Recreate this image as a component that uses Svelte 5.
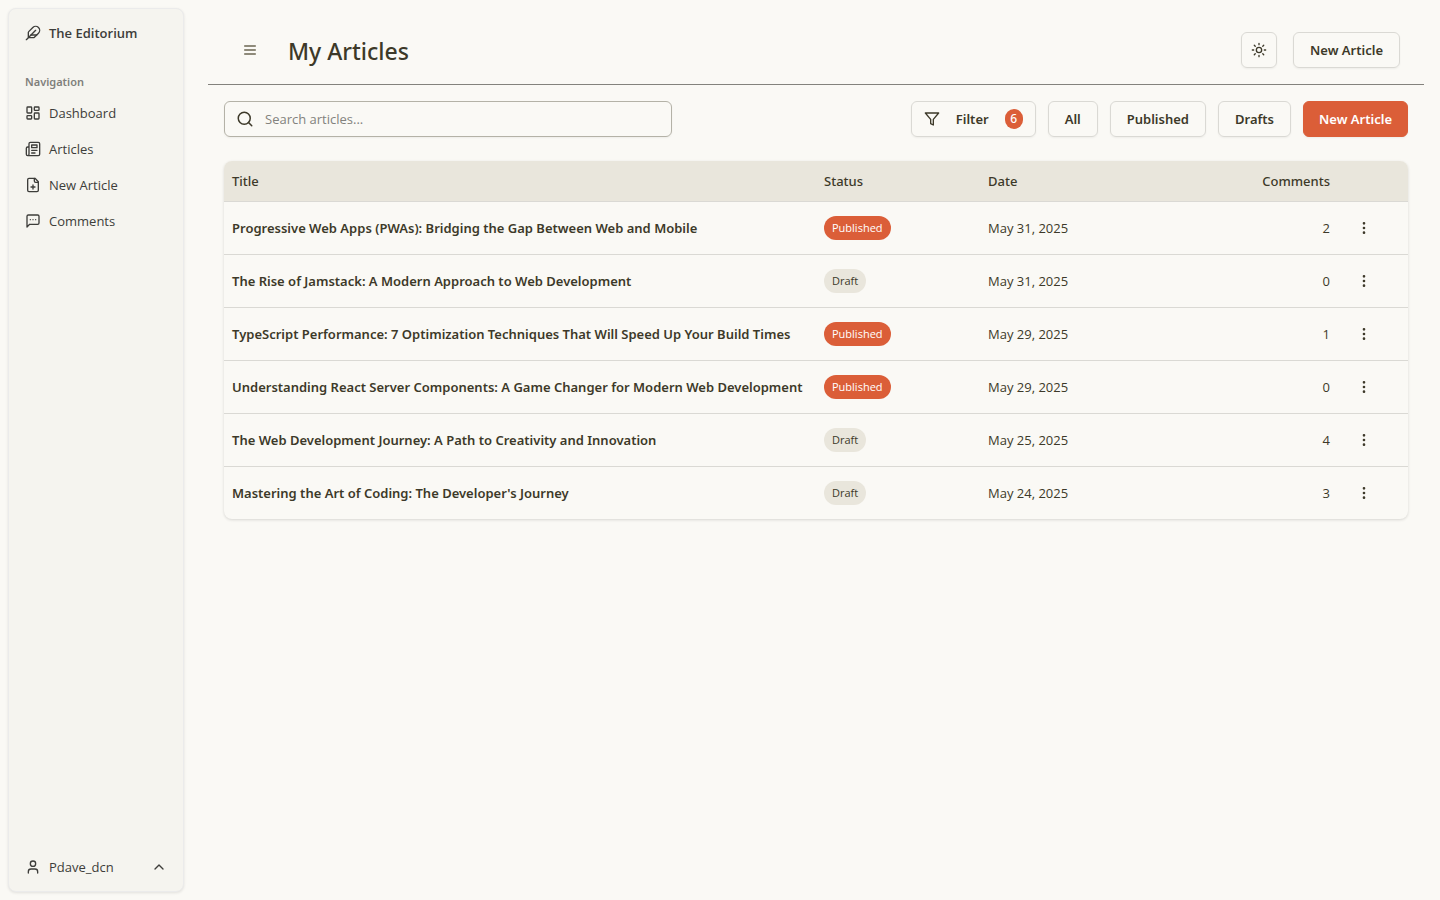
<script>
  const nav = [
    { label: 'Dashboard', icon: 'dashboard' },
    { label: 'Articles', icon: 'newspaper' },
    { label: 'New Article', icon: 'file' },
    { label: 'Comments', icon: 'message' }
  ];
  const articles = [
    { title: 'Progressive Web Apps (PWAs): Bridging the Gap Between Web and Mobile', status: 'Published', date: 'May 31, 2025', comments: 2 },
    { title: 'The Rise of Jamstack: A Modern Approach to Web Development', status: 'Draft', date: 'May 31, 2025', comments: 0 },
    { title: 'TypeScript Performance: 7 Optimization Techniques That Will Speed Up Your Build Times', status: 'Published', date: 'May 29, 2025', comments: 1 },
    { title: 'Understanding React Server Components: A Game Changer for Modern Web Development', status: 'Published', date: 'May 29, 2025', comments: 0 },
    { title: 'The Web Development Journey: A Path to Creativity and Innovation', status: 'Draft', date: 'May 25, 2025', comments: 4 },
    { title: "Mastering the Art of Coding: The Developer's Journey", status: 'Draft', date: 'May 24, 2025', comments: 3 }
  ];
  let query = $state('');
  let filter = $state('All');
  const shown = $derived(
    articles.filter(
      (a) =>
        (filter === 'All' || a.status === filter) &&
        a.title.toLowerCase().includes(query.toLowerCase())
    )
  );
</script>

{#snippet icon(name, size = 16)}
  <svg class="icon" width={size} height={size} viewBox="0 0 24 24" aria-hidden="true">
    {#if name === 'feather'}
      <path d="M12.67 19a2 2 0 0 0 1.416-.588l6.154-6.172a6 6 0 0 0-8.49-8.49L5.586 9.914A2 2 0 0 0 5 11.328V18a1 1 0 0 0 1 1z" />
      <path d="M16 8 2 22" />
      <path d="M17.5 15H9" />
    {:else if name === 'dashboard'}
      <rect width="7" height="9" x="3" y="3" rx="1" />
      <rect width="7" height="5" x="14" y="3" rx="1" />
      <rect width="7" height="9" x="14" y="12" rx="1" />
      <rect width="7" height="5" x="3" y="16" rx="1" />
    {:else if name === 'newspaper'}
      <path d="M4 22h16a2 2 0 0 0 2-2V4a2 2 0 0 0-2-2H8a2 2 0 0 0-2 2v16a2 2 0 0 1-2 2Zm0 0a2 2 0 0 1-2-2v-9c0-1.1.9-2 2-2h2" />
      <path d="M18 14h-8M15 18h-5M10 6h8v4h-8V6Z" />
    {:else if name === 'file'}
      <path d="M15 2H6a2 2 0 0 0-2 2v16a2 2 0 0 0 2 2h12a2 2 0 0 0 2-2V7Z" />
      <path d="M14 2v4a2 2 0 0 0 2 2h4M9 15h6M12 18v-6" />
    {:else if name === 'message'}
      <path d="M21 15a2 2 0 0 1-2 2H7l-4 4V5a2 2 0 0 1 2-2h14a2 2 0 0 1 2 2z" />
      <path d="M8 10h.01M12 10h.01M16 10h.01" />
    {:else if name === 'user'}
      <path d="M19 21v-2a4 4 0 0 0-4-4H9a4 4 0 0 0-4 4v2" />
      <circle cx="12" cy="7" r="4" />
    {:else if name === 'up'}
      <path d="m18 15-6-6-6 6" />
    {:else if name === 'menu'}
      <path d="M4 6h16M4 12h16M4 18h16" />
    {:else if name === 'search'}
      <circle cx="11" cy="11" r="8" />
      <path d="m21 21-4.3-4.3" />
    {:else if name === 'filter'}
      <path d="M22 3H2l8 9.46V19l4 2v-8.54L22 3z" />
    {:else if name === 'sun'}
      <circle cx="12" cy="12" r="4" />
      <path d="M12 2v2M12 20v2m-7.07-17.07 1.41 1.41m11.32 11.32 1.41 1.41M2 12h2m16 0h2M6.34 17.66l-1.41 1.41M19.07 4.93l-1.41 1.41" />
    {:else if name === 'more'}
      <circle class="dot" cx="12" cy="5" r="1" />
      <circle class="dot" cx="12" cy="12" r="1" />
      <circle class="dot" cx="12" cy="19" r="1" />
    {/if}
  </svg>
{/snippet}

<div class="shell">
  <aside>
    <a class="item brand" href="#home">{@render icon('feather')}The Editorium</a>
    <nav aria-labelledby="nav-label">
      <div class="label" id="nav-label">Navigation</div>
      {#each nav as n}
        <a class="item" href="#{n.icon}">{@render icon(n.icon)}{n.label}</a>
      {/each}
    </nav>
    <button class="item account"><span class="who">{@render icon('user')}Pdave_dcn</span>{@render icon('up')}</button>
  </aside>

  <main>
    <header>
      <button class="ghost muted" aria-label="Toggle sidebar">{@render icon('menu')}</button>
      <h1>My Articles</h1>
      <button class="btn square" aria-label="Toggle theme">{@render icon('sun')}</button>
      <button class="btn">New Article</button>
    </header>

    <div class="content">
      <div class="toolbar">
        <label class="search">
          {@render icon('search', 18)}
          <input type="text" aria-label="Search articles" placeholder="Search articles..." bind:value={query} />
        </label>
        <div class="actions">
          <button class="btn filter">{@render icon('filter')}<span>Filter</span><span class="count">6</span></button>
          <button class="btn" onclick={() => (filter = 'All')}>All</button>
          <button class="btn" onclick={() => (filter = 'Published')}>Published</button>
          <button class="btn" onclick={() => (filter = 'Draft')}>Drafts</button>
          <button class="btn primary">New Article</button>
        </div>
      </div>

      <div class="card">
        <table>
          <thead>
            <tr>
              <th>Title</th>
              <th class="status">Status</th>
              <th class="date">Date</th>
              <th class="num">Comments</th>
              <th class="menu"></th>
            </tr>
          </thead>
          <tbody>
            {#each shown as a}
              <tr>
                <td class="title">{a.title}</td>
                <td><span class="badge" class:live={a.status === 'Published'}>{a.status}</span></td>
                <td>{a.date}</td>
                <td class="num">{a.comments}</td>
                <td><button class="ghost" aria-label="Article actions">{@render icon('more')}</button></td>
              </tr>
            {/each}
          </tbody>
        </table>
      </div>
    </div>
  </main>
</div>

<style>
  :global(body) {
    background: #faf9f5;
  }
  .shell {
    --ink: #3d3929;
    --line: #dad9d4;
    --accent: #db5e38;
    --sand: #e9e6dc;
    --medium: 'Segoe UI', 'Noto Sans', sans-serif;
    display: flex;
    min-height: 100vh;
    box-sizing: border-box;
    padding: 8px 16px 8px 8px;
    gap: 24px;
    color: var(--ink);
    font-family: 'Segoe UI', 'Open Sans', 'Noto Sans', sans-serif;
    font-size: 13px;
    line-height: 20px;
  }
  .shell :global(*) {
    box-sizing: border-box;
  }
  button,
  input {
    font: inherit;
    color: inherit;
    background: none;
    border: 0;
    margin: 0;
    padding: 0;
  }
  button {
    cursor: pointer;
  }
  .icon {
    flex: none;
    display: block;
    fill: none;
    stroke: currentColor;
    stroke-width: 2;
    stroke-linecap: round;
    stroke-linejoin: round;
  }
  .dot {
    fill: currentColor;
  }
  aside {
    flex: none;
    width: 176px;
    display: flex;
    flex-direction: column;
    padding: 8px;
    background: #f5f4ef;
    border: 1px solid #ebebeb;
    border-radius: 8px;
    box-shadow: 0 1px 3px rgb(0 0 0 / 0.1);
    color: #3d3d3a;
  }
  nav {
    display: flex;
    flex-direction: column;
    gap: 4px;
    padding-top: 16px;
  }
  .label {
    height: 32px;
    padding: 0 8px;
    font-family: var(--medium);
    font-size: 11px;
    font-weight: 600;
    line-height: 34px;
    color: #7f7f7b;
  }
  .label + .item {
    margin-top: -4px;
  }
  .item {
    display: flex;
    align-items: center;
    gap: 8px;
    height: 32px;
    padding: 0 8px;
    color: inherit;
    text-decoration: none;
  }
  .brand {
    font-weight: 600;
  }
  .account {
    margin-top: auto;
    justify-content: space-between;
  }
  .who {
    display: flex;
    gap: 8px;
    align-items: center;
  }
  main {
    flex: 1;
    min-width: 0;
  }
  header {
    display: flex;
    align-items: center;
    gap: 16px;
    padding: 24px 24px 16px;
    border-bottom: 1px solid #83827d;
  }
  h1 {
    flex: 1;
    margin: 0;
    padding: 2px 0 0 4px;
    font-family: var(--medium);
    font-size: 23px;
    font-weight: 500;
    line-height: 32px;
  }
  .ghost {
    width: 36px;
    height: 36px;
    display: grid;
    place-items: center;
    border-radius: 6px;
  }
  .muted {
    color: #6b6651;
  }
  .btn {
    display: flex;
    align-items: center;
    justify-content: center;
    height: 36px;
    padding: 0 16px;
    border: 1px solid var(--line);
    border-radius: 6px;
    font-family: var(--medium);
    font-weight: 600;
    white-space: nowrap;
    box-shadow: 0 1px 2px rgb(0 0 0 / 0.05);
  }
  .square {
    width: 36px;
    padding: 0;
  }
  .primary {
    padding: 0 15px;
    background: var(--accent);
    border-color: var(--accent);
    color: #fff;
  }
  .content {
    padding: 16px;
  }
  .toolbar {
    display: flex;
    justify-content: space-between;
    gap: 16px;
    margin-bottom: 24px;
  }
  .search {
    display: flex;
    align-items: center;
    gap: 11px;
    flex: 0 1 448px;
    height: 36px;
    padding: 0 11px;
    border: 1px solid #b4b2a7;
    border-radius: 6px;
    box-shadow: 0 1px 2px rgb(0 0 0 / 0.05);
  }
  .search input {
    flex: 1;
    min-width: 0;
    outline: 0;
  }
  .search input::placeholder {
    color: #83827d;
    opacity: 1;
  }
  .actions {
    display: flex;
    gap: 12px;
  }
  .filter {
    gap: 16px;
    padding: 0 12px;
  }
  .count {
    display: grid;
    place-items: center;
    width: 18px;
    height: 20px;
    border-radius: 10px;
    background: var(--accent);
    color: #fff;
    font-size: 12px;
    font-weight: 500;
  }
  .card {
    overflow: hidden;
    border-radius: 8px;
    box-shadow: 0 1px 3px rgb(0 0 0 / 0.14);
  }
  table {
    width: 100%;
    table-layout: fixed;
    border-collapse: collapse;
  }
  th {
    height: 40px;
    padding: 0 8px;
    background: var(--sand);
    text-align: left;
    font-family: var(--medium);
    font-weight: 500;
  }
  td {
    height: 52px;
    padding: 8px;
  }
  tr {
    border-bottom: 1px solid var(--line);
  }
  tbody tr:last-child {
    border-bottom: 0;
  }
  .status,
  .date {
    width: 164px;
  }
  th.num {
    width: 194px;
  }
  .num {
    text-align: right;
  }
  .menu {
    width: 70px;
  }
  .title {
    font-family: var(--medium);
    font-weight: 600;
    white-space: nowrap;
  }
  .badge {
    display: inline-block;
    padding: 2px 8px;
    border-radius: 12px;
    background: var(--sand);
    font-size: 11px;
  }
  .live {
    background: var(--accent);
    color: #fff;
  }
</style>
